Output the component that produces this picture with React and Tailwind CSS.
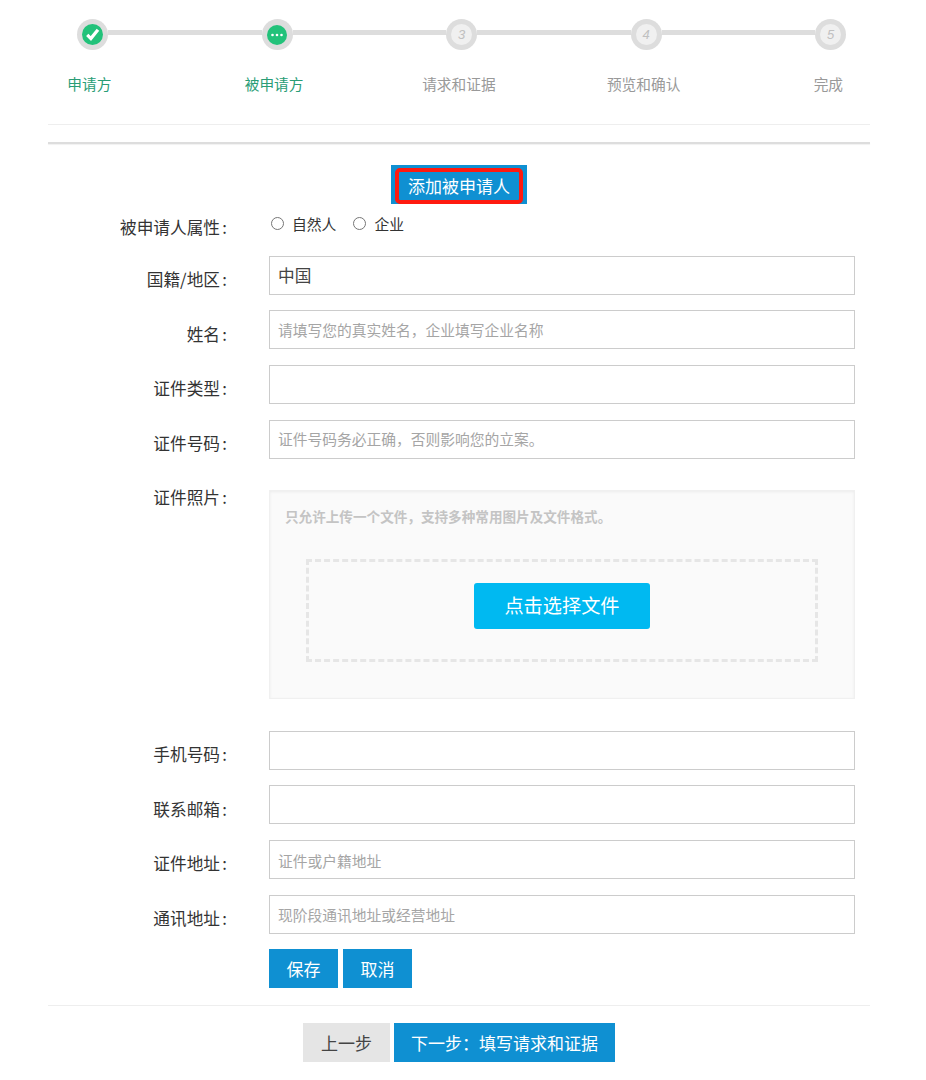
const FONT = "font-['Noto_Sans_CJK_SC','Noto_Sans',sans-serif]";

const labels = [
  { text: "申请方", done: true },
  { text: "被申请方", done: true },
  { text: "请求和证据" },
  { text: "预览和确认" },
  { text: "完成" },
];

function Check() {
  return (
    <svg viewBox="0 0 22 22" className="w-[21px] h-[21px]">
      <circle cx="11" cy="11" r="11" fill="#22c27a" />
      <path d="M5.5 11.5l3.8 3.8 7.4-9.2" fill="none" stroke="#fff" strokeWidth="3.4" />
    </svg>
  );
}

function Dots() {
  return (
    <svg viewBox="0 0 20 20" className="w-[20px] h-[20px]">
      <circle cx="10" cy="10" r="10" fill="#22c27a" />
      <circle cx="5.5" cy="10" r="1.3" fill="#fff" />
      <circle cx="10" cy="10" r="1.3" fill="#fff" />
      <circle cx="14.5" cy="10" r="1.3" fill="#fff" />
    </svg>
  );
}

function Circle({ children }) {
  return (
    <div className="w-[31px] h-[31px] shrink-0 rounded-full bg-[#dddddd] flex items-center justify-center">
      {children}
    </div>
  );
}

function Num({ n }) {
  return (
    <Circle>
      <div className="w-[21px] h-[21px] rounded-full bg-[#f0f0f0] flex items-center justify-center text-[13px] italic text-[#c0c0c0] font-['Liberation_Sans',sans-serif]">
        {n}
      </div>
    </Circle>
  );
}

function Line() {
  return <div className="flex-1 h-[5px] mt-[11px] bg-[#dddddd]" />;
}

function Label({ children, top = "pt-[11px]" }) {
  return (
    <div className={`w-[179px] shrink-0 text-right text-[16.67px] leading-[24px] text-[#333333] ${top}`}>
      {children}
      <span className="ml-[2.4px]">:</span>
    </div>
  );
}

function Row({ label, value, placeholder, mb = "mb-[16px]", top, textShift = "" }) {
  return (
    <div className={`flex ${mb}`}>
      <Label top={top}>{label}</Label>
      <div className="ml-[42px] w-[586px] h-[39px] border border-[#cccccc] px-[8px] flex items-center">
        {value && <span className="text-[16.67px] text-[#444444]">{value}</span>}
        {placeholder && <span className={`text-[14.75px] text-[#a5a5a5] ${textShift}`}>{placeholder}</span>}
      </div>
    </div>
  );
}

function Radio({ label }) {
  return (
    <span className="flex items-center">
      <span className="w-[13px] h-[13px] rounded-full border border-[#767676] bg-white" />
      <span className="ml-[8px] mt-[1px] text-[14.8px] leading-[20px] text-[#333333]">{label}</span>
    </span>
  );
}

export default function App() {
  return (
    <div className={`w-[926px] h-[1080px] overflow-hidden bg-white ${FONT}`}>
      <div className="mx-[48px] w-[822px]">
        <div className="h-[124px]">
          <div className="flex pt-[19px] ml-[29px] w-[769px]">
            <Circle><Check /></Circle>
            <Line />
            <Circle><Dots /></Circle>
            <Line />
            <Num n={3} />
            <Line />
            <Num n={4} />
            <Line />
            <Num n={5} />
          </div>
          <div className="flex mt-[22px] -ml-[51px]">
            {labels.map((l) => (
              <div
                key={l.text}
                className={`w-[184.75px] shrink-0 text-center text-[14.7px] leading-[24px] ${l.done ? "text-[#2a9d76]" : "text-[#999999]"}`}
              >
                {l.text}
              </div>
            ))}
          </div>
        </div>
        <div className="h-[1px] bg-[#eeeeee]" />
        <div className="h-[2px] mt-[17px] bg-[#dddddd] shadow-[0_1px_1px_rgba(0,0,0,0.06)]" />

        <div className="flex justify-center mt-[21px]">
          <div className="w-[136px] h-[39px] bg-[#0f90d2] pt-[3px] px-[4px]">
            <div className="h-[36px] border-[4px] border-[#ff1a0f] rounded-[5px] flex items-center justify-center text-[17px] text-white">
              添加被申请人
            </div>
          </div>
        </div>

        <div className="flex h-[52px]">
          <Label top="pt-[11px]">被申请人属性</Label>
          <div className="ml-[44px] pt-[9px] flex gap-[17px] h-[29px]">
            <Radio label="自然人" />
            <Radio label="企业" />
          </div>
        </div>

        <Row label="国籍/地区" value="中国" mb="mb-[15px]" />
        <Row label="姓名" placeholder={"请填写您的真实姓名\uFF0C企业填写企业名称"} top="pt-[12px]" textShift="mt-[2px]" />
        <Row label="证件类型" />
        <Row label="证件号码" placeholder={"证件号码务必正确\uFF0C否则影响您的立案。"} mb="mb-[31px]" />

        <div className="flex mb-[32px]">
          <Label top="-mt-[5px]">证件照片</Label>
          <div className="ml-[42px] w-[586px] h-[209px] bg-[#fafafa] border border-[#f0f0f0] shadow-[inset_0_1px_3px_rgba(0,0,0,0.06)] px-[15px] pt-[14px]">
            <div className="text-[13.6px] leading-[22px] font-bold text-[#c4c4c4]">
              {"只允许上传一个文件\uFF0C支持多种常用图片及文件格式。"}
            </div>
            <div className="mt-[32px] ml-[21px] w-[512px] h-[103px] border-[3px] border-dashed border-[#e6e6e6] flex items-center justify-center">
              <div className="w-[176px] h-[46px] -mt-[10px] rounded-[3px] bg-[#00b9f1] flex items-center justify-center text-[19.2px] text-white">
                点击选择文件
              </div>
            </div>
          </div>
        </div>

        <Row label="手机号码" mb="mb-[15px]" />
        <Row label="联系邮箱" top="pt-[12px]" />
        <Row label="证件地址" placeholder="证件或户籍地址" textShift="mt-[4px]" />
        <Row label="通讯地址" placeholder="现阶段通讯地址或经营地址" textShift="mt-[2px]" mb="mb-[15px]" />

        <div className="flex ml-[221px] gap-[5px]">
          <div className="w-[69px] h-[39px] bg-[#0f90d2] text-white text-[17px] flex items-center justify-center">保存</div>
          <div className="w-[69px] h-[39px] bg-[#0f90d2] text-white text-[17px] flex items-center justify-center">取消</div>
        </div>

        <div className="h-[1px] mt-[17px] bg-[#eeeeee]" />

        <div className="flex justify-center gap-[4px] mt-[17px]">
          <div className="w-[87px] h-[39px] bg-[#e5e5e5] text-[#444444] text-[17px] flex items-center justify-center">上一步</div>
          <div className="w-[221px] h-[39px] bg-[#0f90d2] text-white text-[17px] flex items-center justify-center">{"下一步\uFF1A填写请求和证据"}</div>
        </div>
      </div>
    </div>
  );
}
